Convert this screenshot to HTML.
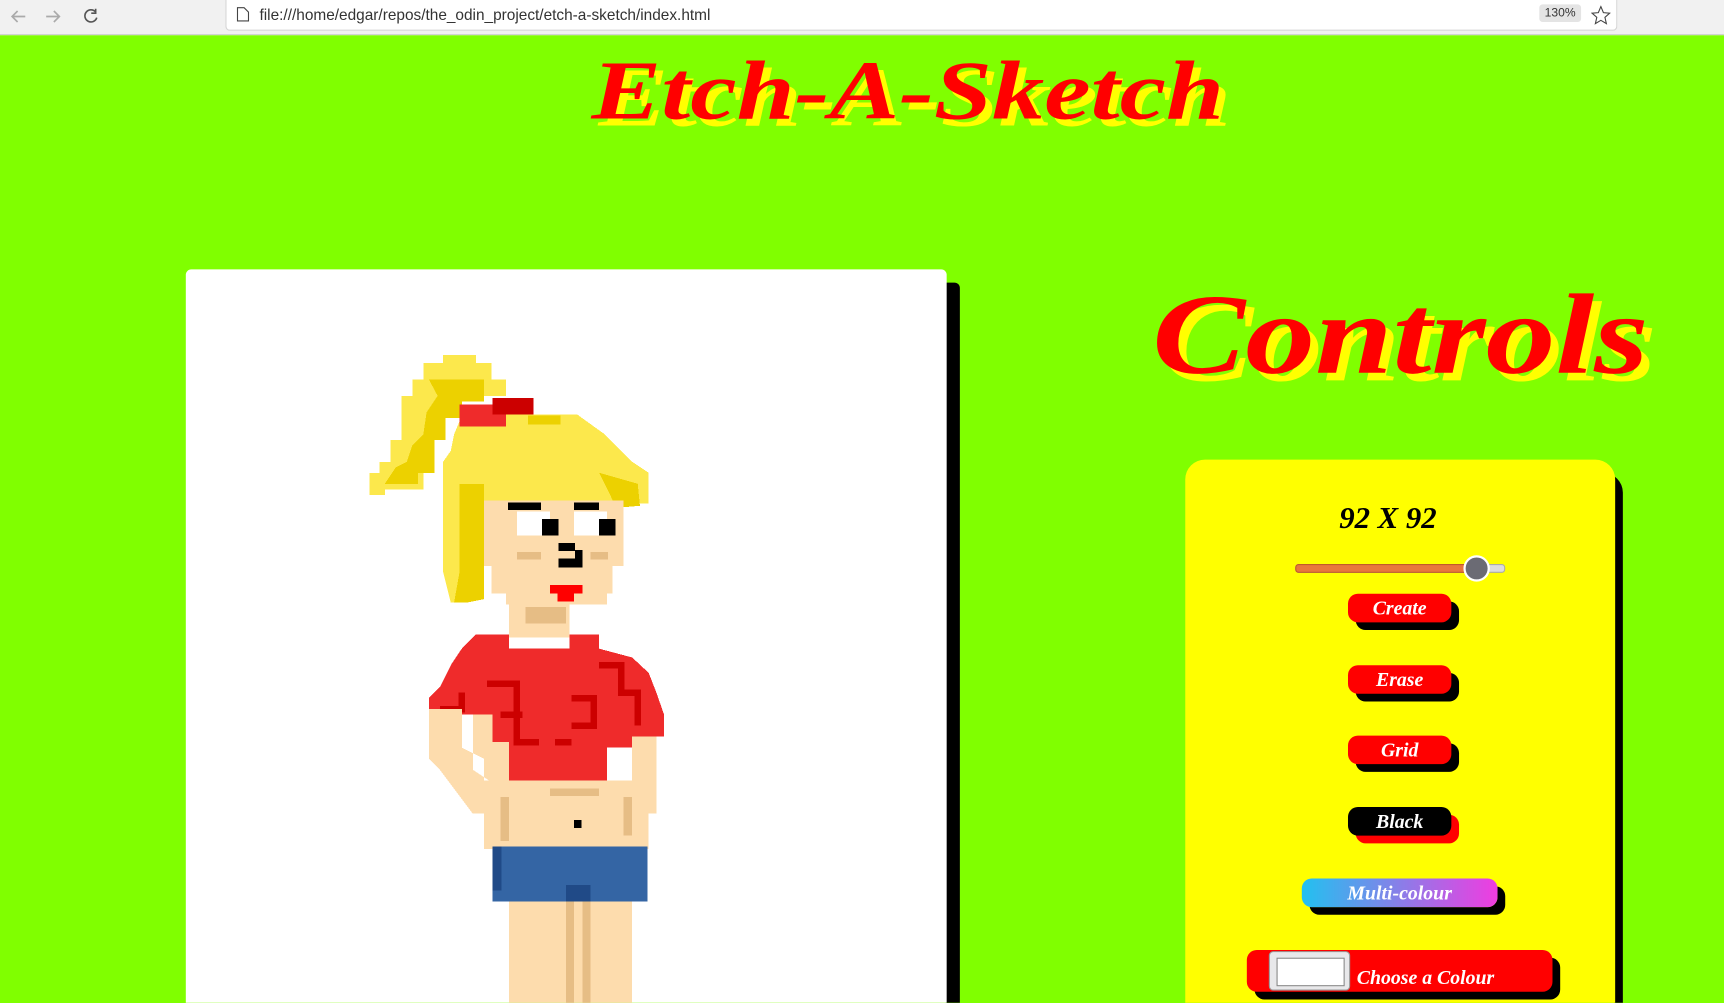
<!DOCTYPE html>
<html><head><meta charset="utf-8"><style>
html,body{margin:0;padding:0;width:1724px;height:1003px;overflow:hidden;background:#80ff00;}
#w{position:absolute;left:0;top:0;width:1568px;height:912px;overflow:hidden;transform:scale(1.0995);transform-origin:0 0;font-family:"Liberation Sans",sans-serif;}
.bar{position:absolute;left:0;top:0;width:1568px;height:31px;background:#f1f1f1;border-bottom:1px solid #d0d0d0;}
.url{position:absolute;left:205px;top:0;width:1264px;height:27px;background:#fff;border:1px solid #d4d4d4;border-top:none;border-radius:0 0 4px 4px;}
.url span{position:absolute;left:30px;top:5px;font-size:14px;color:#333;}
.zoom{position:absolute;right:32px;top:4px;background:#e4e4e4;border-radius:3px;font-size:11px;padding:2px 5px;color:#333;}
.t{position:absolute;color:#f00;font-family:"Liberation Serif",serif;font-style:italic;font-weight:bold;white-space:nowrap;transform-origin:0 0;}
.canvas{position:absolute;left:169px;top:245px;width:692px;height:900px;background:#fff;border-radius:5px;box-shadow:12px 12px 0 #000;}
.panel{position:absolute;left:1078px;top:418px;width:391px;height:800px;background:#ff0;border-radius:18px;box-shadow:7px 12px 0 #000;}
.btn{position:absolute;height:26px;border-radius:9px;color:#fff;font-family:"Liberation Serif",serif;font-style:italic;font-weight:bold;font-size:18px;text-align:center;line-height:26px;box-shadow:7px 7px 0 #000;}
</style></head><body><div id="w">
<div class="bar">
<svg style="position:absolute;left:8px;top:6px" width="90" height="18" viewBox="0 0 90 18"><path d="M15 9H3M8 4L3 9L8 14" stroke="#aaa" stroke-width="1.5" fill="none"/><path d="M34 9H46M41 4L46 9L41 14" stroke="#aaa" stroke-width="1.5" fill="none"/><path d="M79 5A5.5 5.5 0 1 0 80 10M79 2V6H75" stroke="#555" stroke-width="1.5" fill="none"/></svg>
<div class="url"><svg style="position:absolute;left:9px;top:6px" width="12" height="14"><path d="M1 1H7L11 5V13H1Z" stroke="#444" fill="none"/></svg><span>file:///home/edgar/repos/the_odin_project/etch-a-sketch/index.html</span><div class="zoom">130%</div></div>
<svg style="position:absolute;left:1447px;top:5px" width="18" height="18"><path d="M9 1L11.3 6.5L17 7L12.7 10.8L14 16.5L9 13.5L4 16.5L5.3 10.8L1 7L6.7 6.5Z" stroke="#444" fill="none"/></svg>
</div>
<div class="t" style="left:538px;top:40px;font-size:76px;transform:scaleX(1.25);text-shadow:5px 6px 0 #ff0;">Etch-A-Sketch</div>
<div class="t" style="left:1048px;top:245px;font-size:104px;transform:scaleX(1.22);text-shadow:6px 7px 0 #ff0;">Controls</div>
<div class="canvas">
<svg width="692" height="700" viewBox="169 245 692 700" style="position:absolute;left:0;top:0">
<g shape-rendering="crispEdges">
<polygon fill="#fce84c" points="403,323 433,323 433,330 447,330 447,345 460,345 460,360 420,360 420,380 405,380 405,400 395,400 395,425 385,425 385,445 350,445 350,450 336,450 336,430 345,430 345,420 355,420 355,400 365,400 365,360 375,360 375,345 385,345 385,330 403,330"/>
<polygon fill="#ecd100" points="390,345 440,345 440,365 420,365 420,380 405,380 405,400 395,400 395,430 380,430 380,440 350,440 360,425 370,420 375,405 385,395 388,375 398,360"/>
<polygon fill="#fce84c" points="418,383 460,377 525,377 550,395 560,405 575,420 590,430 590,458 567,458 567,455 440,455 440,540 425,548 410,548 403,520 403,420 410,410 413,395"/>
<polygon fill="#ecd100" points="418,440 440,440 440,545 425,548 413,548 418,520"/>
<polygon fill="#ecd100" points="545,430 580,440 582,460 560,462 555,450"/>
<rect x="480" y="378" width="30" height="8" fill="#ecd100"/>
<rect x="418" y="368" width="42" height="20" fill="#ef2b2b"/>
<rect x="448" y="362" width="37" height="15" fill="#cc0000"/>
<rect x="440" y="455" width="127" height="60" fill="#fddcad"/>
<rect x="447" y="515" width="110" height="25" fill="#fddcad"/>
<rect x="460" y="540" width="92" height="10" fill="#fddcad"/>
<rect x="470" y="465" width="30" height="22" fill="#fff"/>
<rect x="522" y="465" width="30" height="22" fill="#fff"/>
<rect x="462" y="457" width="30" height="7" fill="#000"/>
<rect x="522" y="457" width="23" height="7" fill="#000"/>
<rect x="493" y="472" width="15" height="15" fill="#000"/>
<rect x="545" y="472" width="15" height="15" fill="#000"/>
<rect x="508" y="494" width="15" height="7" fill="#000"/>
<rect x="508" y="508" width="22" height="8" fill="#000"/>
<rect x="523" y="500" width="7" height="10" fill="#000"/>
<rect x="470" y="502" width="22" height="7" fill="#e6bd85"/>
<rect x="537" y="502" width="16" height="7" fill="#e6bd85"/>
<rect x="500" y="532" width="30" height="8" fill="#f00"/>
<rect x="507" y="539" width="15" height="8" fill="#f00"/>
<rect x="463" y="548" width="55" height="32" fill="#fddcad"/>
<rect x="478" y="552" width="37" height="15" fill="#e6bd85"/>
<polygon fill="#ef2b2b" points="433,577 463,577 463,590 518,590 518,577 545,577 545,590 575,598 590,612 597,630 604,650 604,670 575,670 575,680 552,680 552,710 463,710 463,675 448,675 448,650 420,650 420,645 390,645 390,635 400,625 410,605 420,590"/>
<path d="M443 622H470V675H490M455 650H475M520 635H540V660H520M545 605H565V630H580V660M400 645H420V630M505 675H520" stroke="#cc0000" stroke-width="6" fill="none"/>
<polygon fill="#fddcad" points="390,645 420,645 420,680 440,690 440,710 463,710 463,675 448,675 448,650 430,650 430,700 445,710 448,740 430,740 415,720 400,700 390,690"/>
<rect x="575" y="670" width="22" height="70" fill="#fddcad"/>
<rect x="440" y="710" width="150" height="62" fill="#fddcad"/>
<rect x="500" y="717" width="45" height="7" fill="#e6bd85"/>
<rect x="455" y="725" width="8" height="40" fill="#e6bd85"/>
<rect x="567" y="725" width="8" height="35" fill="#e6bd85"/>
<rect x="522" y="746" width="7" height="7" fill="#000"/>
<rect x="448" y="770" width="141" height="50" fill="#3465a4"/>
<rect x="448" y="770" width="8" height="40" fill="#204a87"/>
<rect x="515" y="805" width="22" height="15" fill="#204a87"/>
<rect x="463" y="820" width="112" height="125" fill="#fddcad"/>
<rect x="515" y="820" width="7" height="125" fill="#e6bd85"/>
<rect x="530" y="820" width="7" height="125" fill="#e6bd85"/>
</g></svg>
</div>
<div class="panel"></div>
<div class="t" style="left:1218px;top:456px;font-size:28px;color:#000;">92 X 92</div>
<div style="position:absolute;left:1178px;top:513px;width:189px;height:6px;border-radius:3px;background:#ddd;border:1px solid #aaa;"></div>
<div style="position:absolute;left:1178px;top:513px;width:164px;height:6px;border-radius:3px;background:#e8773c;border:1px solid #c05a2a;"></div>
<div style="position:absolute;left:1331px;top:505px;width:20px;height:20px;border-radius:50%;background:#6b6b74;border:2px solid #fff;"></div>
<div class="btn" style="left:1226px;top:540px;width:94px;background:#f00;">Create</div>
<div class="btn" style="left:1226px;top:605px;width:94px;background:#f00;">Erase</div>
<div class="btn" style="left:1226px;top:669px;width:94px;background:#f00;">Grid</div>
<div class="btn" style="left:1226px;top:734px;width:94px;background:#000;box-shadow:7px 7px 0 #f00;">Black</div>
<div class="btn" style="left:1184px;top:799px;width:178px;background:linear-gradient(90deg,#22c1f0,#f03ce0);">Multi-colour</div>
<div class="btn" style="left:1134px;top:864px;width:278px;height:38px;background:#f00;line-height:50px;text-align:left;"><span style="position:absolute;left:20px;top:1px;width:72px;height:34px;background:#e8e8ea;border:1px solid #999;border-radius:4px;"><span style="position:absolute;left:6px;top:5px;width:60px;height:24px;background:#fff;border:1px solid #888;"></span></span><span style="position:absolute;left:100px;top:0;">Choose a Colour</span></div>
</div></body></html>
